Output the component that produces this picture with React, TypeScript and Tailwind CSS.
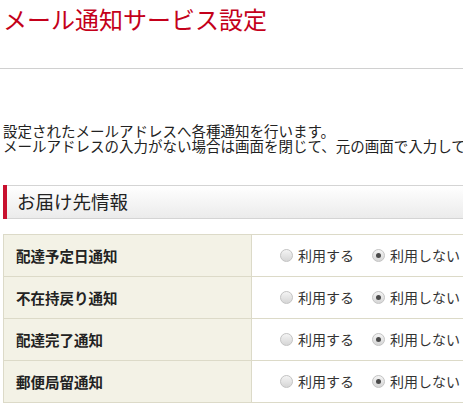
const rows = ['配達予定日通知', '不在持戻り通知', '配達完了通知', '郵便局留通知'];

function Radio({ checked }: { checked: boolean }) {
  return (
    <span className="relative inline-block w-[13px] h-[13px] rounded-full border border-[#c4c4c4] bg-gradient-to-b from-[#f4f4f4] to-[#d6d6d6] shrink-0">
      {checked && (
        <span className="absolute left-[3px] top-[3px] w-[5px] h-[5px] rounded-full bg-[#4a4a4a]" />
      )}
    </span>
  );
}

export default function App() {
  return (
    <div
      className="w-[463px] h-[405px] overflow-hidden bg-white text-[#333]"
      style={{ fontFamily: '"Noto Sans CJK JP", "Noto Sans", sans-serif' }}
    >
      <div className="w-[640px]">
        <h1 className="ml-[3px] pt-[4px] text-[24px] leading-[30px] text-[#c4001a]">
          メール通知サービス設定
        </h1>
        <div className="mt-[34px] border-t border-[#d0d0d0]" />
        <div className="mt-[54px] ml-[3px] text-[14.5px] leading-[15px] text-[#222] whitespace-nowrap">
          <p>設定されたメールアドレスへ各種通知を行います。</p>
          <p>メールアドレスの入力がない場合は画面を閉じて、元の画面で入力してください。</p>
        </div>
        <div className="mt-[32px] ml-[3px] flex h-[34px] border-y border-[#d4d4d4] bg-gradient-to-b from-white to-[#ebebeb]">
          <div className="w-[4px] bg-[#c8102e] -my-px" />
          <div className="pl-[10px] flex items-center text-[18.5px] text-[#222]">お届け先情報</div>
        </div>
        <table className="mt-[15px] ml-[3px] border-collapse w-[620px]">
          <tbody>
            {rows.map((r) => (
              <tr key={r} className="h-[42px]">
                <th className="w-[248px] border border-[#dcdac8] bg-[#f3f2e6] pl-[12px] text-left text-[14.5px] font-bold text-[#222]">
                  {r}
                </th>
                <td className="border border-[#dcdac8] pl-[28px]">
                  <div className="flex items-center text-[14px] text-[#333]">
                    <Radio checked={false} />
                    <span className="ml-[5px]">利用する</span>
                    <span className="ml-[18px]" />
                    <Radio checked />
                    <span className="ml-[5px]">利用しない</span>
                  </div>
                </td>
              </tr>
            ))}
          </tbody>
        </table>
      </div>
    </div>
  );
}
